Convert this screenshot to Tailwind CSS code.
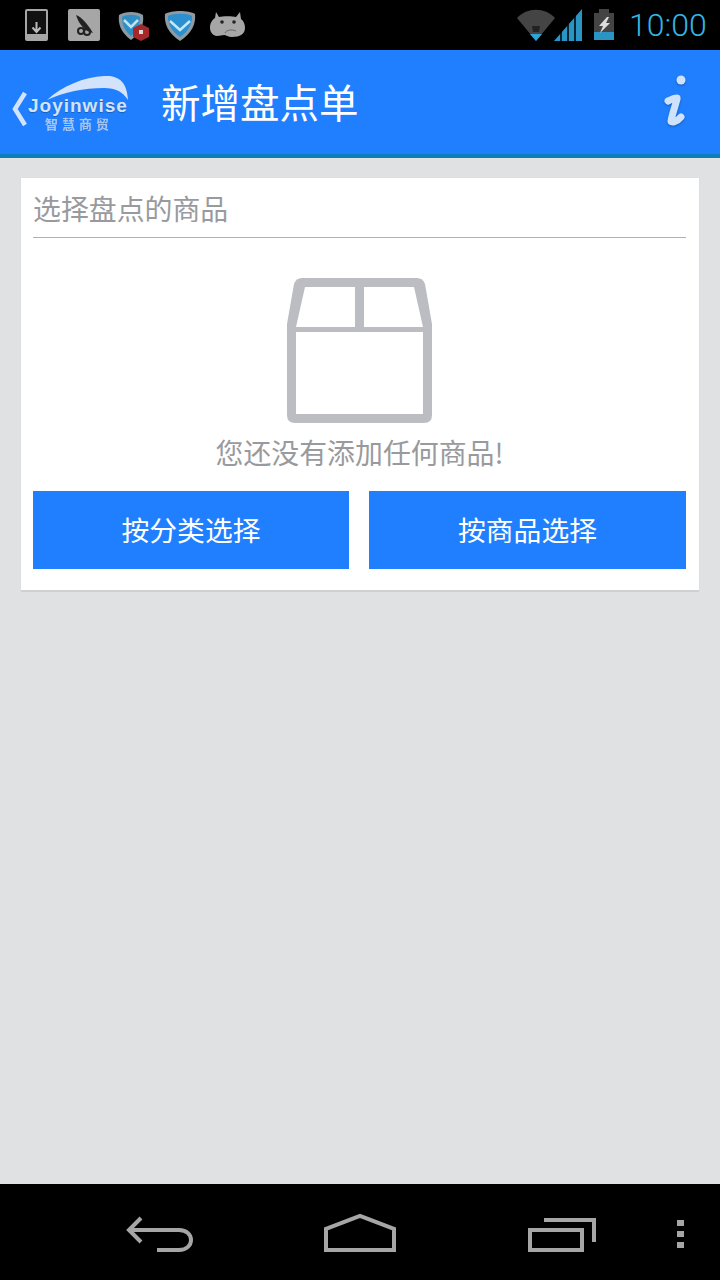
<!DOCTYPE html>
<html lang="zh">

<head>
    <meta charset="UTF-8">
    <meta name="viewport" content="width=device-width, initial-scale=1.0">
    <title>新增盘点单</title>
    <script src="https://cdn.jsdelivr.net/npm/@tailwindcss/browser@4"></script>
</head>

<body class="bg-[#e0e1e3] font-['Noto_Sans_CJK_SC','Noto_Sans',sans-serif]">
    <div class="w-[720px] h-[1280px] flex flex-col overflow-hidden">

        <!-- status bar -->
        <div class="h-[50px] bg-black flex items-center justify-between shrink-0">
            <svg width="260" height="50" viewBox="0 0 260 50">
                <rect x="25" y="9" width="23" height="32" rx="2" fill="#a6a6a6" />
                <rect x="27" y="11" width="19" height="23" fill="#111" />
                <path d="M36.500 22v9M32.500 27.500l4 4.500 4-4.500" fill="none" stroke="#bbb" stroke-width="2" />
                <rect x="68" y="9" width="32" height="32" rx="2" fill="#a6a6a6" />
                <path d="M76 15c6 2 12 10 17 18-7-1-14-8-17-18z" fill="#222" />
                <circle cx="81" cy="31" r="3" fill="none" stroke="#222" stroke-width="2" />
                <circle cx="87" cy="32" r="3" fill="none" stroke="#222" stroke-width="2" />
                <path d="M119 15c6-4 18-4 24 0 1 8-1 17-12 25-11-8-13-17-12-25z" fill="#8b9aa3" />
                <path d="M122 17c5-3 13-3 18 0 0 7-2 13-9 19-7-6-9-12-9-19z" fill="#2f8fc4" />
                <path d="M124 20l7 7 7-7" fill="none" stroke="#bfe3f2" stroke-width="2.500" />
                <path d="M141 24l8 4v9l-8 4-8-4v-9z" fill="#a5282a" />
                <rect x="139" y="30" width="4" height="4" fill="#ddd" />
                <path d="M165 14c6-4 24-4 30 0 1 10-3 19-15 27-12-8-16-17-15-27z" fill="#8f9ba1" />
                <path d="M168 16c5-3 19-3 24 0 0 8-3 15-12 21-9-6-12-13-12-21z" fill="#2b8fd0" />
                <path d="M170 21l10 9 10-9" fill="none" stroke="#c4e8f5" stroke-width="2.500" />
                <path d="M216 12l3 5c3-1 14-1 17 0l4-5 1 7c3 2 4 6 4 9 0 6-5 9-13 9-4 0-6-2-8-2s-4 1-7 1c-4 0-7-4-7-8 0-5 2-8 5-10z" fill="#a6a6a6" />
                <circle cx="222" cy="22" r="1.800" fill="#222" />
                <circle cx="234" cy="22" r="1.800" fill="#222" />
                <path d="M225 33c1-3 7-4 11-2" fill="none" stroke="#666" stroke-width="1" />
            </svg>
            <div class="flex items-center">
                <svg width="130" height="50" viewBox="0 0 130 50">
                    <path d="M17 18c10-11 28-11 38 0L36 41z" fill="#444" />
                    <path d="M32 26h8l-1 6h-6z" fill="#222" />
                    <path d="M30 34h12l-6 7z" fill="#2ea5d6" />
                    <path d="M54 41l28-32v32z" fill="#2a95c4" />
                    <path d="M61 41V30M68 41V22M75 41V14" stroke="#000" stroke-width="1.500" />
                    <rect x="94" y="13" width="20" height="27" fill="#444" />
                    <rect x="99" y="9" width="10" height="4" fill="#444" />
                    <rect x="94" y="32" width="20" height="8" fill="#2a95c4" />
                    <path d="M107 17l-8 9h4l-3 7 10-10h-4l3-6z" fill="#ddd" />
                </svg>
                <span class="text-[32px] leading-none text-[#33b5e5] font-['Roboto'] font-light w-[91px] -ml-[1px]">10:00</span>
            </div>
        </div>

        <!-- header -->
        <div class="h-[108px] bg-[#1f7fff] border-b-4 border-[#0a7fb8] flex items-center justify-between shrink-0">
            <div class="flex items-center">
                <div class="relative w-[161px] h-[104px]">
                    <svg class="absolute left-0 top-0" width="140" height="104" viewBox="0 0 140 104">
                        <path d="M25 43L15 59l10 16" fill="none" stroke="#d3e3fb" stroke-width="4.500" />
                        <path d="M47 50C62 36 84 27 104 26c15-1 23 6 24 24-5-8-12-12-24-12-20 0-40 4-57 12z" fill="#d3e3fb" />
                    </svg>
                    <span class="absolute left-[28px] top-[44px] text-[19px] leading-[24px] font-bold text-[#d3e3fb] font-['Liberation_Sans'] tracking-[1px] [text-shadow:0_1px_1px_#1a5fb8]">Joyinwise</span>
                    <span class="absolute left-[45px] top-[65px] text-[13px] leading-[17px] font-bold text-[#a9c4ee] tracking-[4px] blur-[0.5px]">智慧商贸</span>
                </div>
                <span class="text-[39.5px] leading-none text-white -mt-[3px]">新增盘点单</span>
            </div>
            <svg class="mr-[28px] drop-shadow-[0_1px_1px_rgba(0,0,0,0.3)]" width="34" height="60" viewBox="0 0 34 60">
                <circle cx="23" cy="8" r="4.500" fill="#cfe2fb" />
                <path d="M10 29c4-2 7-3 9-3 1 0-5 16-6 23 0 2 6 1 10-4" fill="none" stroke="#cfe2fb" stroke-width="7" stroke-linecap="round" stroke-linejoin="round" />
            </svg>
        </div>

        <!-- card -->
        <div class="mx-[21px] mt-[20px] h-[412px] bg-white shadow-[0_2px_0_#cfd0d2,0_0_1px_#cfd0d2] pl-[12px] pr-[13px] flex flex-col">
            <div class="h-[60px] border-b border-[#b0b1b5] text-[27.9px] leading-[60px] text-[#999a9e] shrink-0">选择盘点的商品</div>
            <div class="flex justify-center mt-[40px]">
                <svg width="145" height="145" viewBox="0 0 145 145">
                    <path d="M15 0h115q6 0 8 6l7 40v91q0 8-8 8H8q-8 0-8-8V46l7-40q2-6 8-6z" fill="#bcbdc2" />
                    <path d="M18 9h50v40H9zM77 9h50l9 40H77z" fill="#fff" />
                    <rect x="9" y="54" width="127" height="82" fill="#fff" />
                </svg>
            </div>
            <p class="text-[27.9px] leading-[40px] text-[#999a9e] text-center mt-[9px]">您还没有添加任何商品!</p>
            <div class="flex gap-[20px] mt-[19px]">
                <button class="w-[316px] h-[78px] bg-[#1f7fff] text-white text-[27.8px] leading-none">按分类选择</button>
                <button class="w-[317px] h-[78px] bg-[#1f7fff] text-white text-[27.8px] leading-none">按商品选择</button>
            </div>
        </div>

        <div class="flex-1"></div>

        <!-- nav bar -->
        <div class="h-[96px] bg-black flex items-center shrink-0">
            <svg width="720" height="96" viewBox="0 0 720 96">
                <g fill="none" stroke="#a6a6a6" stroke-width="4">
                    <path d="M141 34l-12 12 12 12M129 46h50c16 0 16 20 0 20h-22" />
                    <path d="M326 66V45l34-13 34 13v21z" />
                    <rect x="530" y="46" width="52" height="20" />
                    <path d="M544 36h50v22" />
                </g>
                <rect x="677" y="36" width="7" height="6" fill="#a6a6a6" />
                <rect x="677" y="47" width="7" height="6" fill="#a6a6a6" />
                <rect x="677" y="58" width="7" height="6" fill="#a6a6a6" />
            </svg>
        </div>
    </div>
</body>

</html>
